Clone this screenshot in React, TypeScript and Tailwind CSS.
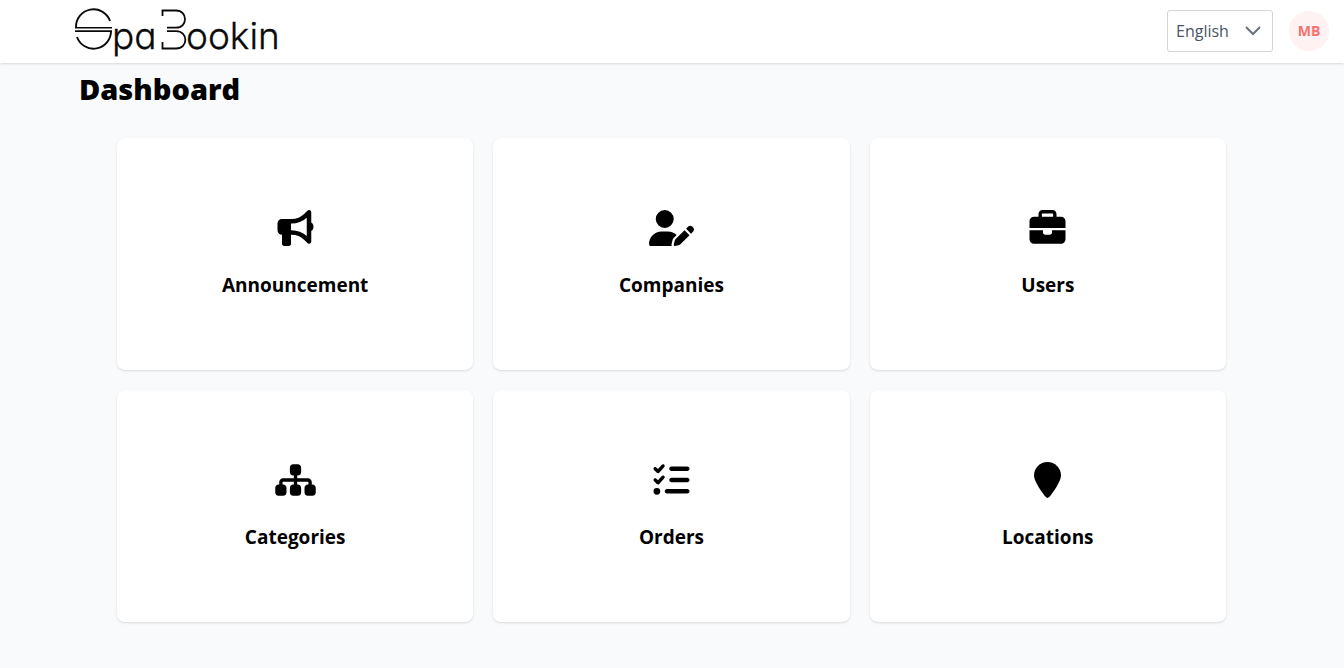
import type { IconType } from "react-icons";
import {
  FaBriefcase,
  FaBullhorn,
  FaListCheck,
  FaLocationPin,
  FaSitemap,
  FaUserPen,
} from "react-icons/fa6";

type Section = { label: string; href: string; icon: IconType };

const sections: Section[] = [
  { label: "Announcement", href: "#announcement", icon: FaBullhorn },
  { label: "Companies", href: "#companies", icon: FaUserPen },
  { label: "Users", href: "#users", icon: FaBriefcase },
  { label: "Categories", href: "#categories", icon: FaSitemap },
  { label: "Orders", href: "#orders", icon: FaListCheck },
  { label: "Locations", href: "#locations", icon: FaLocationPin },
];

function Logo() {
  return (
    <svg
      viewBox="0 0 220 60"
      className="h-[60px] w-[220px]"
      role="img"
      aria-label="SpaBookin"
    >
      <g fill="none" stroke="#0a0a0a" strokeWidth="1.9">
        <path d="M2 26.500A17.500 17.500 0 0 1 36 20" />
        <path d="M1 26.700H38M1 30.100H38" strokeWidth="1.600" />
        <path d="M37 30A17.500 17.500 0 0 1 3 36" />
        <path d="M88.500 15V9.500H102C114 9.500 114 26.700 102 26.700H93" strokeWidth="1.800" />
        <path d="M93 30.100H102C114.500 30.100 114.500 47.500 102 47.500H88.500V41" strokeWidth="1.800" />
      </g>
      <g
        fill="#0a0a0a"
        stroke="#0a0a0a"
        strokeWidth="0.300"
        className="font-[Inter,sans-serif] text-[37px] font-light [font-feature-settings:'cv11','ss03']"
      >
        <text x="38" y="48">pa</text>
        <text x="112" y="48">ookin</text>
      </g>
    </svg>
  );
}

function Header() {
  return (
    <header className="flex h-[63px] items-center justify-between bg-white pr-[15px] pb-px pl-[74px] shadow">
      <a href="#home">
        <Logo />
      </a>
      <div className="flex items-center gap-4">
        <div className="relative">
          <select
            aria-label="Language"
            className="h-[42px] w-[106px] appearance-none rounded-[3px] border border-gray-300 bg-white pr-8 pl-2 text-base text-gray-600"
          >
            <option>English</option>
          </select>
          <svg
            viewBox="0 0 20 20"
            className="pointer-events-none absolute top-[10px] right-[10px] size-5 text-gray-500"
            fill="none"
            stroke="currentColor"
            strokeWidth="2"
            aria-hidden="true"
          >
            <path d="M3 7L10 14L17 7" />
          </svg>
        </div>
        <button
          type="button"
          aria-label="Account MB"
          className="size-10 rounded-full bg-red-50 text-sm font-bold text-[#f87171]"
        >
          MB
        </button>
      </div>
    </header>
  );
}

function SectionCard({ label, href, icon: Icon }: Section) {
  return (
    <a
      href={href}
      className="flex h-[232px] flex-col items-center justify-center gap-[25px] rounded-lg bg-white text-black shadow-sm"
    >
      <Icon className="h-9 w-[45px]" aria-hidden="true" />
      <h2 className="text-[19px] leading-7 font-bold">{label}</h2>
    </a>
  );
}

export default function App() {
  return (
    <div className="min-h-screen bg-slate-50 font-['Open_Sans','Noto_Sans',sans-serif]">
      <Header />
      <main className="mx-auto max-w-[1186px] pt-2 pb-10">
        <h1 className="text-[29px] leading-9 font-extrabold text-black">Dashboard</h1>
        <div className="mt-[31px] grid grid-cols-3 gap-5 pr-[39px] pl-[38px]">
          {sections.map((section) => (
            <SectionCard key={section.label} {...section} />
          ))}
        </div>
      </main>
    </div>
  );
}
